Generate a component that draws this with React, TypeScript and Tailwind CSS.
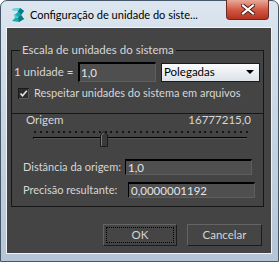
import React from 'react';

function MaxIcon() {
  return (
    <svg width="16" height="16" viewBox="0 0 16 16">
      <path d="M2 2 L10 1 L14 4 L11 8 L14 12 L9 15 L2 14 L5 11 L8 11 L7 9 L4 8 L7 6 L8 4 L4 4 Z" fill="#1aa8b0" />
      <path d="M10 1 L14 4 L11 8 L8 4 Z" fill="#0c7a83" />
      <path d="M11 8 L14 12 L9 15 L8 11 Z" fill="#0c7a83" />
      <path d="M2 2 L10 1 L8 4 L4 4 Z" fill="#6fd8dd" />
      <path d="M4 8 L7 9 L8 11 L5 11 Z" fill="#52c6cc" />
    </svg>
  );
}

function CloseButton() {
  return (
    <div className="flex h-[20px] w-[43px] -mt-[1px] mr-[9px] ml-auto items-center justify-center rounded-b-[4px] border border-t-0 border-[#6a2b22] bg-gradient-to-b from-[#e9a99b] via-[#d35a45] to-[#b3321f]">
      <svg width="14" height="11" viewBox="0 0 14 11">
        <path d="M2 1.5 L12 9.5 M12 1.5 L2 9.5" stroke="#4a1a12" strokeWidth="4" strokeLinecap="square" />
        <path d="M2 1.5 L12 9.5 M12 1.5 L2 9.5" stroke="#ffffff" strokeWidth="2.2" strokeLinecap="square" />
      </svg>
    </div>
  );
}

function CheckBox() {
  return (
    <svg width="11" height="11" viewBox="0 0 11 11">
      <rect x="0.5" y="0.5" width="10" height="10" fill="#2c2c2c" stroke="#1a1a1a" />
      <path d="M1 10.5 H10.5 V1" fill="none" stroke="#5c5c5c" />
      <path d="M2.5 5.5 L4.5 7.8 L8.8 2.8" fill="none" stroke="#e4e4e4" strokeWidth="1.6" />
    </svg>
  );
}

function Thumb() {
  return (
    <svg width="8" height="16" viewBox="0 0 8 16">
      <path d="M0.5 4 L4 0.5 L7.5 4 L7.5 15.5 L0.5 15.5 Z" fill="#3a3a3a" stroke="#1a1a1a" />
      <path d="M1.5 15 L1.5 4.4 L4 1.8" fill="none" stroke="#7a7a7a" />
    </svg>
  );
}

function Field({ value, width }: { value: string; width: string }) {
  return (
    <div
      className={`flex h-[16px] items-center whitespace-nowrap border-t-2 border-l border-r border-b border-t-black border-l-black border-r-[#5e5e5e] border-b-[#5e5e5e] bg-[#4f4f4f] pl-[2px] text-[11.5px] leading-[12px] text-[#e4e4e4] ${width}`}
    >
      {value}
    </div>
  );
}

function Button({ label, focused, width }: { label: string; focused?: boolean; width: string }) {
  return (
    <div
      className={`flex h-[22px] items-center justify-center border border-t-[#646464] border-l-[#646464] border-r-[#1c1c1c] border-b-[#1c1c1c] bg-[#454545] p-[2px] text-[11.5px] text-[#d4d4d4] ${width}`}
    >
      <div
        className={`flex h-full w-full items-center justify-center border border-dotted ${
          focused ? 'border-black' : 'border-transparent'
        }`}
      >
        {label}
      </div>
    </div>
  );
}

export default function App() {
  const ticks = Array.from({ length: 37 });

  return (
    <div className="flex h-[262px] w-[279px] flex-col whitespace-nowrap rounded-t-[7px] border border-[#47576a] bg-gradient-to-b from-[#dce6f0] via-[#c7d4e1] to-[#b6c5d5] font-['Lato',sans-serif]">
      {/* barra de título */}
      <div className="flex h-[26px] items-start">
        <div className="ml-[9px] mt-[6px]">
          <MaxIcon />
        </div>
        <span className="ml-[4px] mt-[6px] text-[11px] leading-[16px] text-black">
          Configuração de unidade do siste...
        </span>
        <CloseButton />
      </div>

      {/* área do cliente */}
      <div className="ml-[5px] h-[227px] w-[266px] border border-[#eef3f8] bg-[#444444]">
        <fieldset className="ml-[4px] mt-[14px] w-[253px] border border-[#161616] pb-[8px]">
          <legend className="ml-[8px] px-[2px] text-[11.5px] leading-[16px] text-[#d6d6d6]">
            Escala de unidades do sistema
          </legend>

          <div className="mt-[4px] flex h-[20px] items-center">
            <span className="w-[66px] shrink-0 pl-[2px] text-[11.5px] text-[#d6d6d6]">1 unidade =</span>
            <div className="flex h-[20px] w-[78px] shrink-0 items-center border-t-2 border-l-2 border-r border-b border-t-black border-l-black border-r-[#5e5e5e] border-b-[#5e5e5e] bg-[#4f4f4f] pl-[1px] text-[11.5px] text-[#e4e4e4]">
              1,0
            </div>
            <div className="ml-[5px] flex h-[19px] w-[99px] shrink-0 items-center justify-between border border-[#1b1b1b] bg-gradient-to-b from-[#fbfcfd] to-[#dce2e9] pl-[2px] pr-[5px] text-[11.5px] text-black">
              <span>Polegadas</span>
              <svg width="8" height="4" viewBox="0 0 8 4">
                <path d="M0 0 H8 L4 4 Z" fill="#000000" />
              </svg>
            </div>
          </div>

          <div className="mt-[4px] flex h-[14px] items-center pl-[6px]">
            <CheckBox />
            <span className="ml-[5px] text-[11px] text-[#d6d6d6]">Respeitar unidades do sistema em arquivos</span>
          </div>

          <div className="mt-[13px] h-px bg-[#161616]" />

          <div className="flex h-[12px] items-center justify-between pl-[14px] pr-[12px] text-[11.5px] leading-[12px] text-[#d6d6d6]">
            <span>Origem</span>
            <span>16777215,0</span>
          </div>

          <div className="relative ml-[21px] mt-[4px] h-[16px] w-[216px]">
            <div className="mt-[5px] flex h-[2px] justify-between px-[1px]">
              {ticks.map((_, i) => (
                <div key={i} className="h-[2px] w-[2px] bg-[#141414]" />
              ))}
            </div>
            <div className="mt-[4px] h-[2px] w-[214px] border-t border-l border-t-black border-l-black border-b border-b-[#555555]" />
            <div className="absolute left-[67px] top-0">
              <Thumb />
            </div>
          </div>

          <div className="mt-[12px] flex h-[16px] items-center">
            <span className="w-[113px] shrink-0 pl-[11px] text-[11px] text-[#d6d6d6]">Distância da origem:</span>
            <Field value="1,0" width="w-[127px] shrink-0" />
          </div>

          <div className="mt-[7px] flex h-[16px] items-center">
            <span className="w-[116px] shrink-0 pl-[11px] text-[11px] text-[#d6d6d6]">Precisão resultante:</span>
            <Field value="0,0000001192" width="w-[127px] shrink-0" />
          </div>
        </fieldset>

        <div className="mt-[17px] flex justify-end gap-[10px] pr-[9px]">
          <Button label="OK" focused width="w-[74px]" />
          <Button label="Cancelar" width="w-[75px]" />
        </div>
      </div>
    </div>
  );
}
